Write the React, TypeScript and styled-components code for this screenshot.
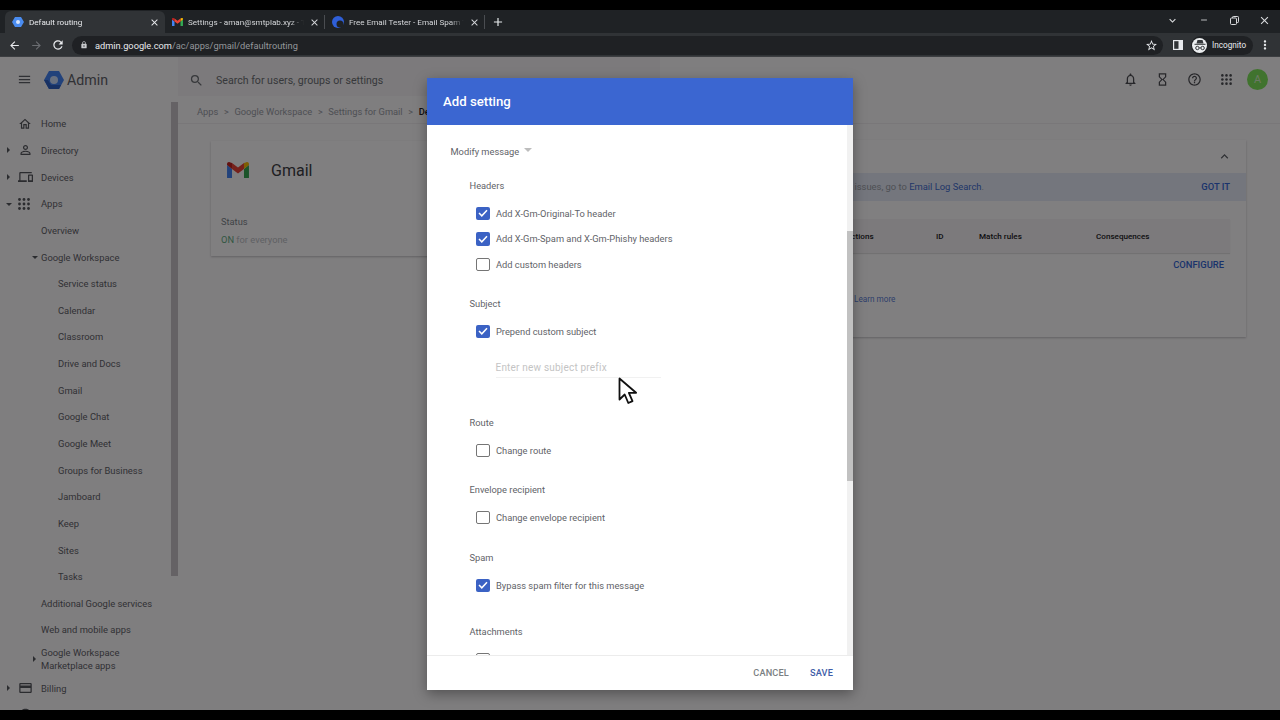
import React from 'react';
import styled, { createGlobalStyle } from 'styled-components';
import {
  MdAdd,
  MdArrowBack,
  MdArrowForward,
  MdClose,
  MdExpandLess,
  MdExpandMore,
  MdHelpOutline,
  MdHourglassEmpty,
  MdLock,
  MdMenu,
  MdMoreVert,
  MdOutlineAccountCircle,
  MdOutlineCreditCard,
  MdOutlineDevices,
  MdOutlineHome,
  MdOutlineNotifications,
  MdPersonOutline,
  MdRefresh,
  MdRemove,
  MdSearch,
  MdStarBorder,
} from 'react-icons/md';

const GlobalStyle = createGlobalStyle`
  html, body {
    margin: 0;
    padding: 0;
    background: #000;
  }
  * {
    box-sizing: border-box;
  }
`;

const Frame = styled.div`
  width: 1280px;
  height: 720px;
  padding: 10px 0;
  background: #000;
  display: flex;
  flex-direction: column;
  overflow: hidden;
  font-family: Roboto, 'Liberation Sans', sans-serif;
`;

/* browser chrome */
const TabStrip = styled.div`
  height: 23px;
  flex: none;
  background: #1f2225;
  display: flex;
  align-items: stretch;
  padding: 1px 0 0 5px;
  color: #e8eaed;
`;

const Tab = styled.div<{ $active?: boolean }>`
  width: 160px;
  flex: none;
  display: flex;
  align-items: center;
  gap: 5px;
  padding: 0 5px 0 7px;
  font-size: 8.1px;
  border-radius: 6px 6px 0 0;
  background: ${(p) => (p.$active ? '#303336' : 'transparent')};
  color: ${(p) => (p.$active ? '#e8eaed' : '#d5d7da')};
`;

const TabTitle = styled.span`
  flex: 1;
  min-width: 0;
  white-space: nowrap;
  overflow: hidden;
  -webkit-mask-image: linear-gradient(to right, #000 88%, transparent);
  mask-image: linear-gradient(to right, #000 88%, transparent);
`;

const TabDivider = styled.div`
  width: 1px;
  height: 14px;
  align-self: center;
  background: #4a4d51;
  flex: none;
  margin-left: -1px;
`;

const NewTab = styled.div`
  display: flex;
  align-items: center;
  margin-left: 6px;
  font-size: 15px;
`;

const WindowControls = styled.div`
  margin-left: auto;
  display: flex;
  align-items: center;
  padding-bottom: 4px;
  color: #d8dadd;
`;

const WindowButton = styled.div`
  width: 30.6px;
  display: flex;
  justify-content: center;
`;

const Toolbar = styled.div`
  height: 24px;
  flex: none;
  background: #303336;
  border-bottom: 1px solid #3c3e41;
  display: flex;
  align-items: center;
  padding: 1px 0 0 4px;
  color: #e8eaed;
`;

const NavButton = styled.div<{ $dim?: boolean }>`
  width: 21.5px;
  display: flex;
  justify-content: center;
  color: ${(p) => (p.$dim ? '#6b6e72' : '#e8eaed')};
`;

const AddressBar = styled.div`
  width: 1091px;
  height: 19px;
  margin-left: 3.5px;
  border-radius: 10px;
  background: #1f2124;
  display: flex;
  align-items: center;
  padding: 0 5px 0 8px;
  font-size: 9.25px;
  color: #94979b;
`;

const Host = styled.span`
  color: #e8eaed;
  margin-left: 7px;
`;

const StarSlot = styled.div`
  margin-left: auto;
  display: flex;
`;

const ToolbarRight = styled.div`
  display: flex;
  align-items: center;
  margin-left: 10px;
  flex: 1;
`;

const IncognitoPill = styled.div`
  margin-left: 8px;
  height: 19px;
  width: 62px;
  display: flex;
  align-items: center;
  gap: 5px;
  padding-left: 1px;
  border-radius: 10px;
  background: #1f2124;
  font-size: 8.2px;
  color: #e8eaed;
`;

const IncognitoBadge = styled.div`
  width: 15px;
  height: 15px;
  border-radius: 50%;
  background: #eceef0;
  display: flex;
  align-items: center;
  justify-content: center;
  flex: none;
`;

const MenuDots = styled.div`
  margin-left: 5px;
  display: flex;
`;

/* admin page */
const Page = styled.div`
  position: relative;
  flex: 1;
  min-height: 0;
  display: flex;
  flex-direction: column;
  background: #fdfcfd;
  color: #5f6368;
  overflow: hidden;
`;

const AppHeader = styled.header`
  height: 45px;
  flex: none;
  display: flex;
  align-items: flex-start;
`;

const Brand = styled.div`
  width: 178px;
  flex: none;
  height: 45px;
  display: flex;
  align-items: center;
  padding: 0 0 0 17px;
  gap: 12px;
  color: #5f6368;
`;

const BrandName = styled.span`
  font-size: 14.2px;
  color: #5f6368;
  margin-left: -9px;
`;

const SearchBar = styled.div`
  width: 482px;
  height: 39px;
  background: #f6f5f6;
  display: flex;
  align-items: center;
  gap: 12px;
  padding: 7px 0 0 11px;
  font-size: 10.6px;
  color: #6d7175;
`;

const HeaderIcons = styled.div`
  margin-left: auto;
  height: 45px;
  display: flex;
  align-items: center;
  padding-right: 12px;
  color: #4c4f53;
`;

const HeaderIcon = styled.div`
  width: 32px;
  display: flex;
  justify-content: center;
`;

const Avatar = styled.div`
  width: 21px;
  height: 21px;
  border-radius: 50%;
  background: #7fe65a;
  color: #d6f0c8;
  font-size: 11px;
  display: flex;
  align-items: center;
  justify-content: center;
  margin-left: 5px;
`;

const Body = styled.div`
  flex: 1;
  min-height: 0;
  display: flex;
`;

const Sidebar = styled.nav`
  width: 171px;
  flex: none;
  padding-top: 8.5px;
  overflow: hidden;
`;

const SideRail = styled.div`
  width: 7px;
  flex: none;
`;

const SideThumb = styled.div`
  height: 474px;
  background: #c8c5c8;
`;

const NavRow = styled.div<{ $indent?: number; $tall?: boolean }>`
  height: ${(p) => (p.$tall ? '31.4px' : '26.65px')};
  display: flex;
  align-items: center;
  padding-left: ${(p) => p.$indent ?? 41}px;
  position: relative;
  font-size: 9.4px;
  line-height: 13px;
  color: #5f6368;
`;

const NavIcon = styled.span`
  position: absolute;
  left: 18px;
  top: 50%;
  transform: translateY(-50%);
  display: flex;
  color: #55585c;
`;

const Caret = styled.span<{ $open?: boolean; $x: number }>`
  position: absolute;
  left: ${(p) => p.$x}px;
  top: 50%;
  width: 0;
  height: 0;
  ${(p) =>
    p.$open
      ? `margin-top: -1px;
         border-left: 3px solid transparent;
         border-right: 3px solid transparent;
         border-top: 3px solid #55585c;`
      : `margin-top: -3px;
         border-top: 3px solid transparent;
         border-bottom: 3px solid transparent;
         border-left: 3px solid #55585c;`}
`;

const Content = styled.main`
  flex: 1;
  min-width: 0;
  display: flex;
  flex-direction: column;
`;

const Breadcrumbs = styled.div`
  height: 22px;
  flex: none;
  display: flex;
  align-items: center;
  gap: 5.7px;
  padding: 0 0 2px 19px;
  font-size: 9.3px;
  color: #9aa0a6;
  border-bottom: 1px solid #f0eff0;
`;

const CrumbSep = styled.span`
  font-size: 9px;
`;

const CrumbCurrent = styled.span`
  color: #202124;
  font-weight: 500;
`;

const Cards = styled.div`
  padding: 16px 34px 0 33px;
  display: flex;
  gap: 9px;
  align-items: flex-start;
`;

const GmailCard = styled.section`
  width: 230px;
  height: 115px;
  flex: none;
  margin-top: 1px;
  background: #fff;
  box-shadow: 0 1px 2px rgba(60, 64, 67, 0.3);
  padding: 18px 10px 0;
`;

const GmailHead = styled.div`
  display: flex;
  align-items: center;
  gap: 22px;
  padding-left: 6px;
  font-size: 16px;
  color: #3c4043;
  height: 22px;
`;

const StatusLabel = styled.div`
  margin-top: 35px;
  font-size: 9.3px;
  color: #80868b;
`;

const StatusValue = styled.div`
  margin-top: 7px;
  font-size: 9.3px;
  color: #bdc1c6;
`;

const StatusOn = styled.span`
  color: #5fae82;
`;

const RouteCard = styled.section`
  flex: 1;
  height: 197px;
  background: #fff;
  box-shadow: 0 1px 2px rgba(60, 64, 67, 0.3);
  display: flex;
  flex-direction: column;
`;

const RouteHead = styled.div`
  height: 33px;
  flex: none;
  display: flex;
  align-items: center;
  justify-content: flex-end;
  padding-right: 14px;
  color: #5f6368;
`;

const Banner = styled.div`
  height: 28px;
  flex: none;
  background: #e6ecf9;
  display: flex;
  align-items: center;
  padding: 0 16px 1px;
  font-size: 9.4px;
  color: #9aa0a6;
`;

const BannerText = styled.div`
  width: 518px;
  flex: none;
  text-align: right;
  white-space: nowrap;
`;

const LinkText = styled.span`
  color: #3f6ed0;
`;

const GotIt = styled.span`
  margin-left: auto;
  font-size: 9.4px;
  font-weight: 500;
  color: #3367d6;
`;

const TableHead = styled.div`
  margin: 18px 16px 0;
  height: 34px;
  flex: none;
  background: #f6f5f6;
  box-shadow: 0 1px 1px rgba(60, 64, 67, 0.15);
  display: grid;
  grid-template-columns: 90px 43px 117px 1fr;
  align-items: center;
  padding: 0 0 1px 380px;
  font-size: 8.1px;
  font-weight: 500;
  color: #202124;
`;

const ConfigureRow = styled.div`
  display: flex;
  justify-content: flex-end;
  padding: 6px 22px 0 0;
  font-size: 9.4px;
  font-weight: 500;
  color: #3367d6;
`;

const LearnRow = styled.div`
  padding: 24px 0 0 404px;
  font-size: 8.2px;
  color: #5c7fd6;
`;

/* dialog */
const Scrim = styled.div`
  position: absolute;
  inset: 0;
  background: rgba(2, 0, 2, 0.5);
  display: flex;
  justify-content: center;
  align-items: center;
`;

const Dialog = styled.div`
  width: 426px;
  height: 612px;
  margin-top: 1px;
  background: #fff;
  display: flex;
  flex-direction: column;
  position: relative;
  box-shadow: 0 4px 12px rgba(0, 0, 0, 0.35);
`;

const DialogHeader = styled.div`
  height: 47px;
  flex: none;
  background: #3b66d1;
  color: #fff;
  display: flex;
  align-items: center;
  padding-left: 16px;
  font-size: 13.2px;
  font-weight: 500;
`;

const DialogBody = styled.div`
  flex: 1;
  min-height: 0;
  overflow: hidden;
  padding: 18px 0 0 23.5px;
  position: relative;
  font-size: 9.3px;
  color: #5f6368;
`;

const ActionSelect = styled.div`
  height: 16px;
  display: flex;
  align-items: center;
  gap: 5px;
`;

const SelectCaret = styled.span`
  width: 0;
  height: 0;
  margin-top: -2px;
  border-left: 4px solid transparent;
  border-right: 4px solid transparent;
  border-top: 4px solid #bdbdbd;
`;

const Section = styled.div<{ $gap?: number }>`
  margin-top: ${(p) => p.$gap ?? 18}px;
  padding-left: 19px;
`;

const SectionTitle = styled.div`
  height: 16px;
  display: flex;
  align-items: center;
  margin-bottom: 7.5px;
`;

const CheckRow = styled.label`
  height: 25.5px;
  display: flex;
  align-items: center;
  gap: 6.5px;
  padding-left: 6.5px;
`;

const CheckBox = styled.span<{ $checked?: boolean }>`
  width: 13.5px;
  height: 13.5px;
  flex: none;
  border-radius: 2px;
  display: flex;
  align-items: center;
  justify-content: center;
  background: ${(p) => (p.$checked ? '#3b62c4' : '#fff')};
  border: ${(p) => (p.$checked ? 'none' : '1.5px solid #757575')};
`;

const SubjectInput = styled.div`
  margin: 14px 0 0 26px;
  width: 165px;
  height: 20px;
  display: flex;
  align-items: center;
  border-bottom: 1px solid #f1f1f1;
  color: #c4c4c4;
  font-size: 10px;
  letter-spacing: 0.2px;
`;

const ScrollTrack = styled.div`
  position: absolute;
  top: 0;
  right: 0;
  width: 6px;
  height: 100%;
  background: #f1f1f1;
`;

const ScrollThumb = styled.div`
  height: 250px;
  margin-top: 106px;
  background: #c1c1c1;
`;

const DialogFooter = styled.div`
  height: 35px;
  flex: none;
  border-top: 1px solid #ececec;
  display: flex;
  align-items: center;
  justify-content: flex-end;
  gap: 21px;
  padding: 0 20px 1px 0;
  font-size: 9.2px;
  font-weight: 500;
  letter-spacing: 0.15px;
`;

const Cancel = styled.span`
  color: #7b7f83;
`;

const Save = styled.span`
  color: #3f5da8;
`;

const Pointer = styled.svg`
  position: absolute;
  left: 191px;
  top: 252px;
`;

const AdminLogo = () => (
  <svg width="20" height="18" viewBox="0 0 20 18">
    <path d="M5 0h10l5 9-5 9H5L0 9z" fill="#4285f4" />
    <path d="M0 9l5 9h10l2-4H7L4 9z" fill="#2f62c4" />
    <circle cx="10" cy="9" r="4" fill="#cfe0fc" />
  </svg>
);

const GmailLogo = ({ size = 22 }: { size?: number }) => (
  <svg width={size} height={size * 0.77} viewBox="0 0 22 17">
    <path d="M0 3v12.5A1.5 1.5 0 0 0 1.5 17H5V7z" fill="#4285f4" />
    <path d="M17 7v10h3.5a1.5 1.5 0 0 0 1.5-1.5V3z" fill="#34a853" />
    <path d="M17 1v6l5-4V2c0-1.800-2-2.600-3.400-1.500z" fill="#fbbc04" />
    <path d="M0 3l5 4V1L3.400.5C2-.6 0 .2 0 2z" fill="#c5221f" />
    <path d="M5 1v6l6 4.500L17 7V1l-6 4.500z" fill="#ea4335" />
  </svg>
);

const DotGrid = ({ size, color }: { size: number; color: string }) => (
  <svg width={size} height={size} viewBox="0 0 12 12" fill={color}>
    {[1.5, 6, 10.5].map((y) =>
      [1.5, 6, 10.5].map((x) => <circle key={`${x}-${y}`} cx={x} cy={y} r="1.400" />),
    )}
  </svg>
);

const RestoreIcon = () => (
  <svg width="9" height="9" viewBox="0 0 9 9" fill="none" stroke="#d8dadd" strokeWidth="1">
    <rect x="0.500" y="2" width="6" height="6.500" rx="1" />
    <path d="M2.500 2V1.300a.8.8 0 0 1 .8-.8h4.400a.8.8 0 0 1 .8.8v4.400a.8.8 0 0 1-.8.8H6.500" />
  </svg>
);

const IncognitoIcon = () => (
  <svg width="12" height="11" viewBox="0 0 12 11" fill="#35383b">
    <path d="M3.500 0h5l1 3.500H2.500z" />
    <rect x="0.500" y="3.800" width="11" height="1" />
    <circle cx="3.400" cy="8" r="1.700" fill="none" stroke="#35383b" />
    <circle cx="8.600" cy="8" r="1.700" fill="none" stroke="#35383b" />
    <rect x="5" y="7.500" width="2" height="0.800" />
  </svg>
);

const SidePanelIcon = () => (
  <svg width="10" height="10" viewBox="0 0 10 10">
    <rect width="10" height="10" fill="#e8eaed" />
    <rect x="1.200" y="1.200" width="4.300" height="7.600" fill="#303336" />
  </svg>
);

const Check = () => (
  <svg width="10" height="8" viewBox="0 0 10 8" fill="none">
    <path d="M1 4l2.800 2.800L9 1.200" stroke="#fff" strokeWidth="1.500" />
  </svg>
);

const CheckItem = ({ label, checked }: { label: string; checked?: boolean }) => (
  <CheckRow>
    <CheckBox $checked={checked}>{checked && <Check />}</CheckBox>
    {label}
  </CheckRow>
);

const subItems = [
  'Service status',
  'Calendar',
  'Classroom',
  'Drive and Docs',
  'Gmail',
  'Google Chat',
  'Google Meet',
  'Groups for Business',
  'Jamboard',
  'Keep',
  'Sites',
  'Tasks',
];

const App: React.FC = () => {
  return (
    <Frame>
      <GlobalStyle />
      <TabStrip>
        <Tab $active>
          <svg width="12" height="12" viewBox="0 0 12 12">
            <path d="M3 1h6l3 5-3 5H3L0 6z" fill="#4a8cf0" />
            <circle cx="6" cy="6" r="2" fill="#d6e4fb" />
          </svg>
          <TabTitle>Default routing</TabTitle>
          <MdClose size={11} />
        </Tab>
        <Tab>
          <GmailLogo size={11} />
          <TabTitle>Settings - aman@smtplab.xyz - T</TabTitle>
          <MdClose size={11} />
        </Tab>
        <TabDivider />
        <Tab>
          <svg width="12" height="12" viewBox="0 0 12 12">
            <circle cx="6" cy="6" r="6" fill="#2f5fd8" />
            <circle cx="8" cy="8" r="3.500" fill="#1f2225" />
          </svg>
          <TabTitle>Free Email Tester - Email Spam Te</TabTitle>
          <MdClose size={11} />
        </Tab>
        <TabDivider />
        <NewTab>
          <MdAdd size={14} />
        </NewTab>
        <WindowControls>
          <WindowButton>
            <MdExpandMore size={13} />
          </WindowButton>
          <WindowButton>
            <MdRemove size={10} />
          </WindowButton>
          <WindowButton>
            <RestoreIcon />
          </WindowButton>
          <WindowButton>
            <MdClose size={13} />
          </WindowButton>
        </WindowControls>
      </TabStrip>

      <Toolbar>
        <NavButton>
          <MdArrowBack size={13} />
        </NavButton>
        <NavButton $dim>
          <MdArrowForward size={13} />
        </NavButton>
        <NavButton>
          <MdRefresh size={14} />
        </NavButton>
        <AddressBar>
          <MdLock size={8} color="#c8cacd" />
          <Host>admin.google.com</Host>/ac/apps/gmail/defaultrouting
          <StarSlot>
            <MdStarBorder size={13} color="#e8eaed" />
          </StarSlot>
        </AddressBar>
        <ToolbarRight>
          <SidePanelIcon />
          <IncognitoPill>
            <IncognitoBadge>
              <IncognitoIcon />
            </IncognitoBadge>
            Incognito
          </IncognitoPill>
          <MenuDots>
            <MdMoreVert size={14} />
          </MenuDots>
        </ToolbarRight>
      </Toolbar>

      <Page>
        <AppHeader>
          <Brand>
            <MdMenu size={15} />
            <AdminLogo />
            <BrandName>Admin</BrandName>
          </Brand>
          <SearchBar>
            <MdSearch size={15} />
            Search for users, groups or settings
          </SearchBar>
          <HeaderIcons>
            <HeaderIcon>
              <MdOutlineNotifications size={15} />
            </HeaderIcon>
            <HeaderIcon>
              <MdHourglassEmpty size={15} />
            </HeaderIcon>
            <HeaderIcon>
              <MdHelpOutline size={15} />
            </HeaderIcon>
            <HeaderIcon>
              <DotGrid size={11} color="#4c4f53" />
            </HeaderIcon>
            <Avatar>A</Avatar>
          </HeaderIcons>
        </AppHeader>

        <Body>
          <Sidebar>
            <NavRow>
              <NavIcon>
                <MdOutlineHome size={14} />
              </NavIcon>
              Home
            </NavRow>
            <NavRow>
              <Caret $x={7} />
              <NavIcon>
                <MdPersonOutline size={15} />
              </NavIcon>
              Directory
            </NavRow>
            <NavRow>
              <Caret $x={7} />
              <NavIcon>
                <MdOutlineDevices size={15} />
              </NavIcon>
              Devices
            </NavRow>
            <NavRow>
              <Caret $x={6} $open />
              <NavIcon>
                <DotGrid size={12} color="#55585c" />
              </NavIcon>
              Apps
            </NavRow>
            <NavRow>Overview</NavRow>
            <NavRow>
              <Caret $x={32} $open />
              Google Workspace
            </NavRow>
            {subItems.map((item) => (
              <NavRow key={item} $indent={58}>
                {item}
              </NavRow>
            ))}
            <NavRow>Additional Google services</NavRow>
            <NavRow>Web and mobile apps</NavRow>
            <NavRow $tall>
              <Caret $x={33} />
              <span>
                Google Workspace
                <br />
                Marketplace apps
              </span>
            </NavRow>
            <NavRow>
              <Caret $x={7} />
              <NavIcon>
                <MdOutlineCreditCard size={15} />
              </NavIcon>
              Billing
            </NavRow>
            <NavRow>
              <NavIcon>
                <MdOutlineAccountCircle size={15} />
              </NavIcon>
            </NavRow>
          </Sidebar>
          <SideRail>
            <SideThumb />
          </SideRail>

          <Content>
            <Breadcrumbs>
              <span>Apps</span>
              <CrumbSep>&gt;</CrumbSep>
              <span>Google Workspace</span>
              <CrumbSep>&gt;</CrumbSep>
              <span>Settings for Gmail</span>
              <CrumbSep>&gt;</CrumbSep>
              <CrumbCurrent>Default routing</CrumbCurrent>
            </Breadcrumbs>
            <Cards>
              <GmailCard>
                <GmailHead>
                  <GmailLogo />
                  Gmail
                </GmailHead>
                <StatusLabel>Status</StatusLabel>
                <StatusValue>
                  <StatusOn>ON</StatusOn> for everyone
                </StatusValue>
              </GmailCard>
              <RouteCard>
                <RouteHead>
                  <MdExpandLess size={15} />
                </RouteHead>
                <Banner>
                  <BannerText>
                    To troubleshoot mail delivery issues, go to <LinkText>Email Log Search</LinkText>.
                  </BannerText>
                  <GotIt>GOT IT</GotIt>
                </Banner>
                <TableHead>
                  <span>Actions</span>
                  <span>ID</span>
                  <span>Match rules</span>
                  <span>Consequences</span>
                </TableHead>
                <ConfigureRow>CONFIGURE</ConfigureRow>
                <LearnRow>Learn more</LearnRow>
              </RouteCard>
            </Cards>
          </Content>
        </Body>

        <Scrim>
          <Dialog>
            <DialogHeader>Add setting</DialogHeader>
            <DialogBody>
              <ActionSelect>
                Modify message
                <SelectCaret />
              </ActionSelect>
              <Section>
                <SectionTitle>Headers</SectionTitle>
                <CheckItem label="Add X-Gm-Original-To header" checked />
                <CheckItem label="Add X-Gm-Spam and X-Gm-Phishy headers" checked />
                <CheckItem label="Add custom headers" />
              </Section>
              <Section>
                <SectionTitle>Subject</SectionTitle>
                <CheckItem label="Prepend custom subject" checked />
                <SubjectInput>Enter new subject prefix</SubjectInput>
              </Section>
              <Section $gap={36}>
                <SectionTitle>Route</SectionTitle>
                <CheckItem label="Change route" />
              </Section>
              <Section>
                <SectionTitle>Envelope recipient</SectionTitle>
                <CheckItem label="Change envelope recipient" />
              </Section>
              <Section $gap={19}>
                <SectionTitle>Spam</SectionTitle>
                <CheckItem label="Bypass spam filter for this message" checked />
              </Section>
              <Section $gap={25}>
                <SectionTitle>Attachments</SectionTitle>
                <CheckRow>
                  <CheckBox />
                </CheckRow>
              </Section>
              <ScrollTrack>
                <ScrollThumb />
              </ScrollTrack>
              <Pointer width="20" height="28" viewBox="0 0 20 28">
                <path
                  d="M1.500 1.500v21l5.200-5 3.600 8.500 4.200-1.800-3.600-8.400h7.200z"
                  fill="#fff"
                  stroke="#111"
                  strokeWidth="1.800"
                  strokeLinejoin="round"
                />
              </Pointer>
            </DialogBody>
            <DialogFooter>
              <Cancel>CANCEL</Cancel>
              <Save>SAVE</Save>
            </DialogFooter>
          </Dialog>
        </Scrim>
      </Page>
    </Frame>
  );
};

export default App;
